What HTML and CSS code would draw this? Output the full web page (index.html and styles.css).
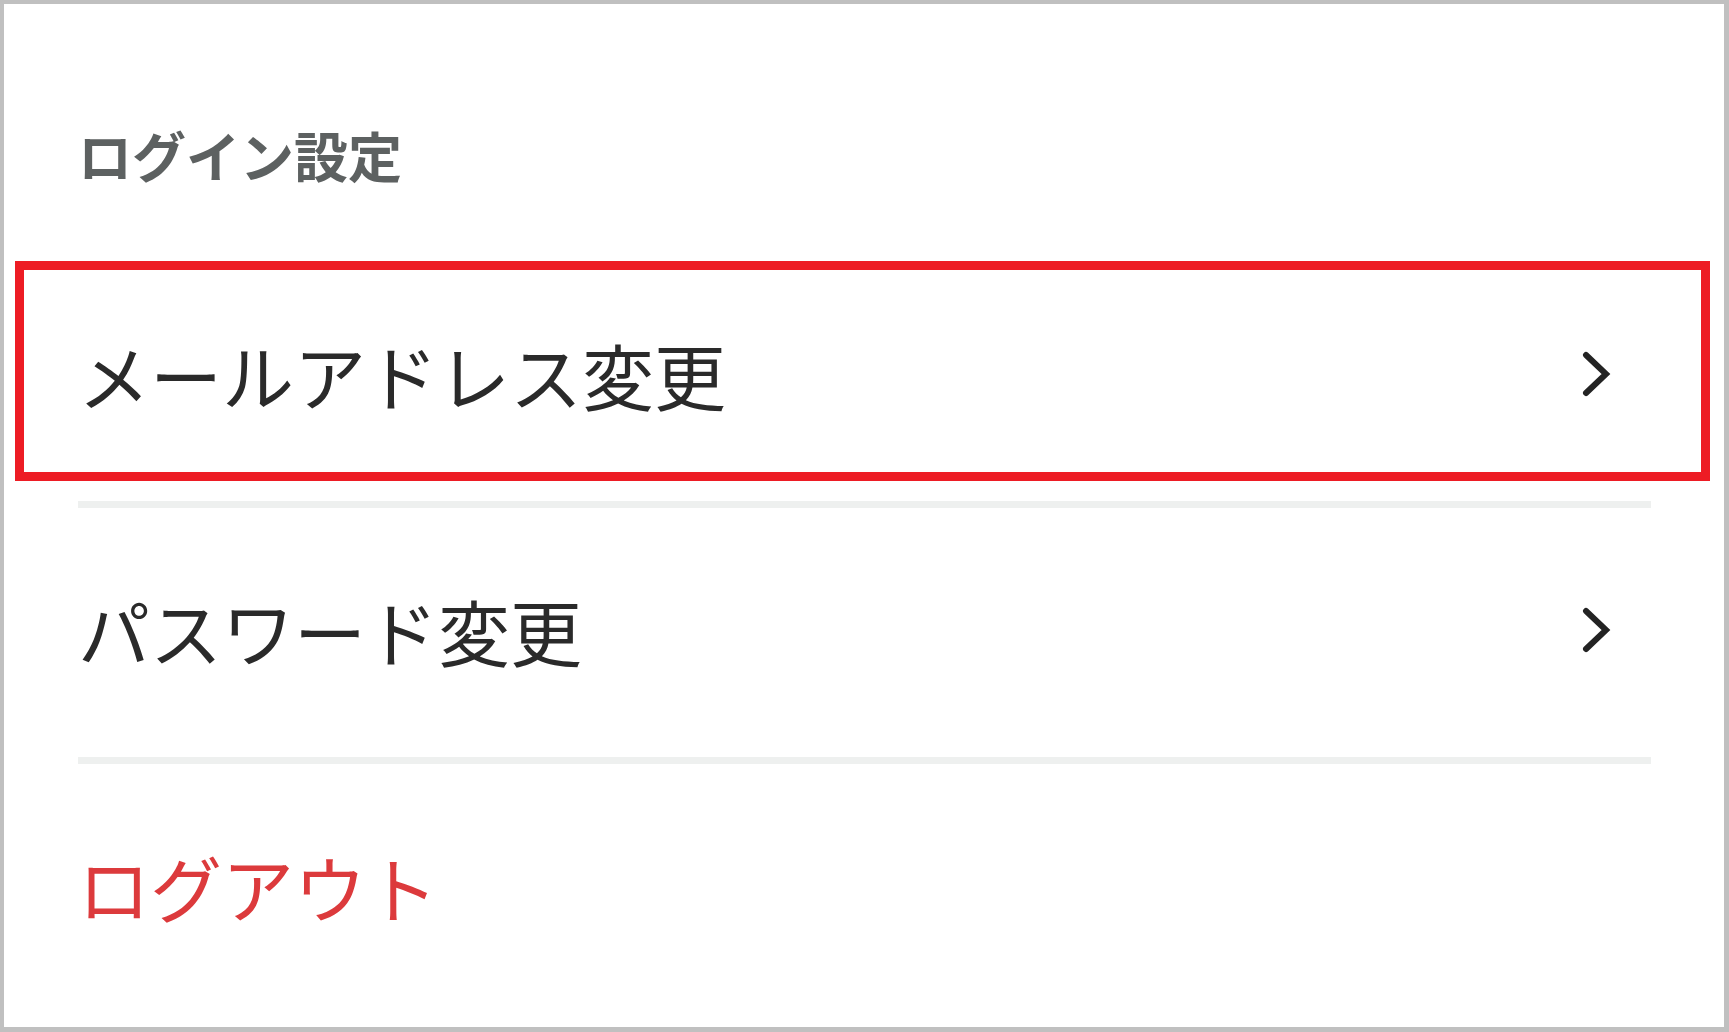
FILE: index.html
```html
<!DOCTYPE html>
<html lang="ja">
<head>
<meta charset="utf-8">
<title>ログイン設定</title>
<link rel="stylesheet" href="styles.css">
</head>
<body>
<div class="screen">
  <section class="settings">
    <h2 class="section-title">ログイン設定</h2>
    <ul class="menu">
      <li class="menu-item with-divider">
        <span class="label">メールアドレス変更</span>
        <svg class="chevron" width="30" height="46" viewBox="0 0 30 46"><polyline points="5,4 25,23 5,42" fill="none" stroke="#232323" stroke-width="6" stroke-linecap="round" stroke-linejoin="miter"/></svg>
        <span class="callout"></span>
      </li>
      <li class="menu-item with-divider">
        <span class="label">パスワード変更</span>
        <svg class="chevron" width="30" height="46" viewBox="0 0 30 46"><polyline points="5,4 25,23 5,42" fill="none" stroke="#232323" stroke-width="6" stroke-linecap="round" stroke-linejoin="miter"/></svg>
      </li>
      <li class="menu-item">
        <span class="label logout">ログアウト</span>
      </li>
    </ul>
  </section>
</div>
</body>
</html>
```
FILE: styles.css
```css
html, body {
  margin: 0;
  padding: 0;
  background: #ffffff;
}

body {
  font-family: "Noto Sans CJK JP", "Noto Sans", sans-serif;
}

.screen {
  box-sizing: border-box;
  width: 1729px;
  height: 1032px;
  border-style: solid;
  border-color: #c0c0c0;
  border-width: 4px 5px 5px 4px;
  background: #ffffff;
  overflow: hidden;
}

.settings {
  padding-left: 74px;
}

.section-title {
  margin: 0;
  padding-top: 111px;
  height: 80px;
  line-height: 80px;
  font-size: 54px;
  font-weight: 700;
  color: #5d6161;
}

.menu {
  list-style: none;
  margin: 57px 0 0 0;
  padding: 0;
  width: 1573px;
}

.menu-item {
  position: relative;
  box-sizing: border-box;
  height: 249px;
  padding-bottom: 6px;
  display: flex;
  align-items: center;
  justify-content: space-between;
}

.menu-item.with-divider {
  height: 256px;
  border-bottom: 7px solid #eef0ef;
}

.label {
  font-size: 72px;
  line-height: 1;
  font-weight: 400;
  color: #2a2a2a;
  white-space: nowrap;
}

.label.logout {
  color: #dc3a3c;
}

.chevron {
  display: block;
  margin-right: 40px;
}

.callout {
  position: absolute;
  left: -63px;
  top: 9px;
  width: 1695px;
  height: 220px;
  box-sizing: border-box;
  border: 9px solid #ed1c24;
  pointer-events: none;
}
```
